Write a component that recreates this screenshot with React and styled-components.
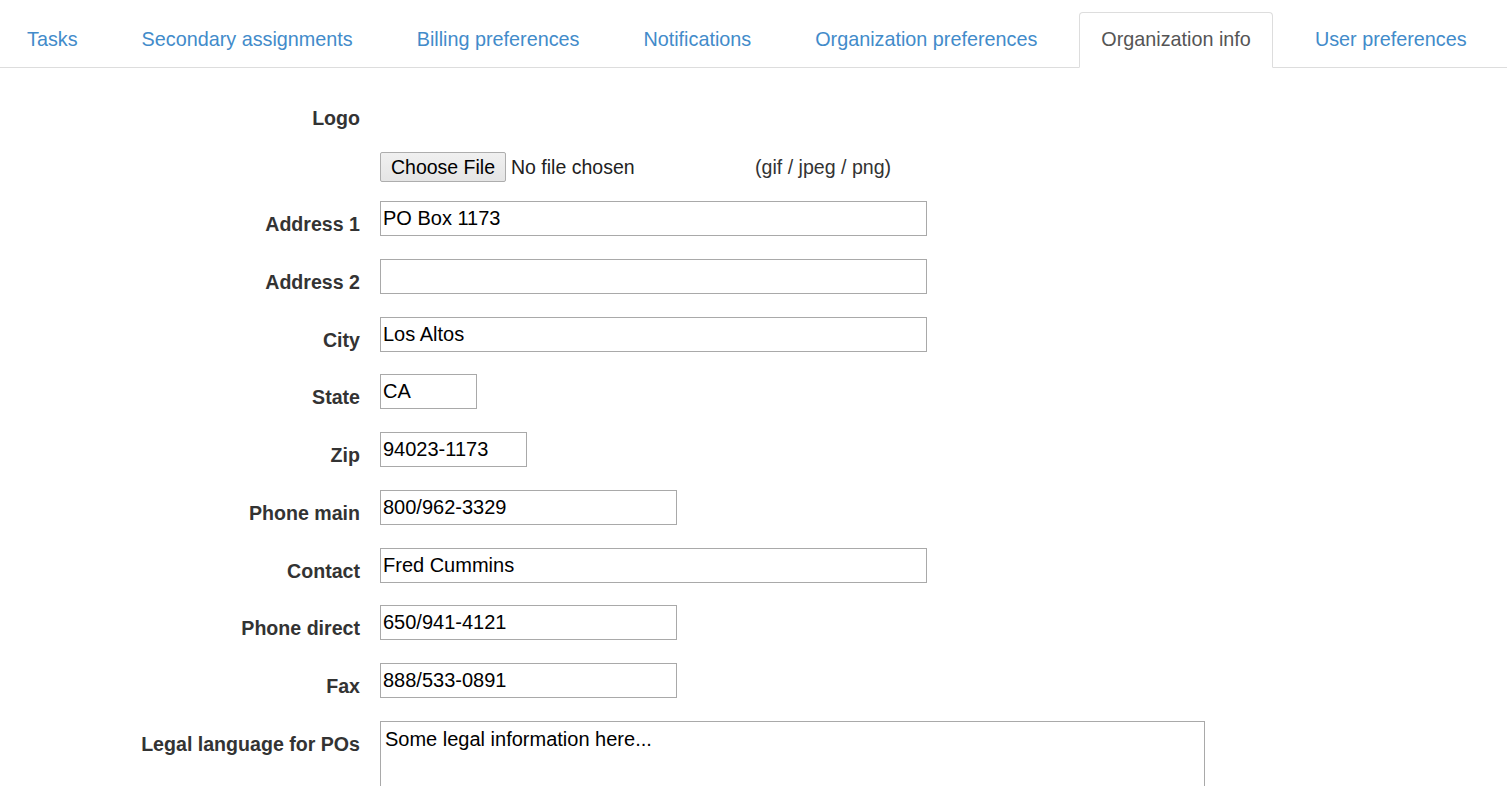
import React from "react";
import styled, { createGlobalStyle } from "styled-components";

const Global = createGlobalStyle`
  html, body { margin: 0; padding: 0; background: #fff; }
  body {
    font-family: "Liberation Sans", Arial, Helvetica, sans-serif;
    color: #333;
    overflow: hidden;
  }
  * { box-sizing: border-box; }
`;

const TabBar = styled.ul`
  display: flex;
  list-style: none;
  margin: 12px 0 0 0;
  padding: 0 0 0 5px;
  border-bottom: 1px solid #ddd;
`;

const TabItem = styled.li`
  margin: 0 20px -1px 0;
`;

const TabLink = styled.a`
  display: block;
  padding: 12px 21px 14px;
  line-height: 28px;
  font-size: 19.8px;
  text-decoration: none;
  white-space: nowrap;
  border: 1px solid ${(p) => (p.$active ? "#ddd" : "transparent")};
  border-bottom-color: ${(p) => (p.$active ? "#fff" : "transparent")};
  border-radius: 4px 4px 0 0;
  background: ${(p) => (p.$active ? "#fff" : "transparent")};
  color: ${(p) => (p.$active ? "#555" : "#428bca")};
  cursor: ${(p) => (p.$active ? "default" : "pointer")};
`;

const Form = styled.form`
  margin-top: 27px;
`;

const Row = styled.div`
  display: grid;
  grid-template-columns: 360px 1fr;
  column-gap: 20px;
  align-items: start;
  margin-bottom: ${(p) => p.$gap ?? "22.75px"};
`;

const Label = styled.label`
  text-align: right;
  font-weight: bold;
  font-size: 19.6px;
  line-height: 23px;
  padding-top: 12px;
  white-space: nowrap;
  color: #333;
`;

const Field = styled.div`
  display: flex;
  align-items: center;
`;

const TextInput = styled.input`
  width: ${(p) => p.$w}px;
  height: 35px;
  padding: 1px 2px;
  border: 1px solid #a9a9a9;
  border-radius: 0;
  font-family: "Liberation Sans", Arial, sans-serif;
  font-size: 20px;
  color: #000;
  background: #fff;
  outline: none;
`;

const TextArea = styled.textarea`
  width: 825px;
  height: 130px;
  padding: 6px 4px;
  border: 1px solid #a9a9a9;
  border-radius: 0;
  font-family: "Liberation Sans", Arial, sans-serif;
  font-size: 20px;
  line-height: 23px;
  color: #000;
  resize: none;
  outline: none;
  display: block;
`;

const FileControl = styled.div`
  width: 375px;
  display: flex;
  align-items: center;
  gap: 5px;
`;

const FileButton = styled.button`
  height: 30px;
  width: 126px;
  padding: 0;
  border: 1px solid #adadad;
  border-radius: 2px;
  background: linear-gradient(#f0f0f0, #e5e5e5);
  font-family: "Liberation Sans", Arial, sans-serif;
  font-size: 19.5px;
  color: #000;
  line-height: 28px;
`;

const FileStatus = styled.span`
  font-size: 19.5px;
  color: #222;
`;

const Hint = styled.span`
  font-size: 19.6px;
  color: #333;
`;

const tabs = [
  "Tasks",
  "Secondary assignments",
  "Billing preferences",
  "Notifications",
  "Organization preferences",
  "Organization info",
  "User preferences",
];

const fields = [
  { label: "Address 1", value: "PO Box 1173", w: 547 },
  { label: "Address 2", value: "", w: 547 },
  { label: "City", value: "Los Altos", w: 547 },
  { label: "State", value: "CA", w: 97 },
  { label: "Zip", value: "94023-1173", w: 147 },
  { label: "Phone main", value: "800/962-3329", w: 297 },
  { label: "Contact", value: "Fred Cummins", w: 547 },
  { label: "Phone direct", value: "650/941-4121", w: 297 },
  { label: "Fax", value: "888/533-0891", w: 297 },
];

export default function App() {
  return (
    <>
      <Global />
      <TabBar>
        {tabs.map((t) => (
          <TabItem key={t}>
            <TabLink $active={t === "Organization info"}>{t}</TabLink>
          </TabItem>
        ))}
      </TabBar>
      <Form onSubmit={(e) => e.preventDefault()}>
        <Row $gap="22px">
          <Label>Logo</Label>
          <div />
        </Row>
        <Row $gap="19px">
          <div />
          <Field>
            <FileControl>
              <FileButton type="button">Choose File</FileButton>
              <FileStatus>No file chosen</FileStatus>
            </FileControl>
            <Hint>(gif / jpeg / png)</Hint>
          </Field>
        </Row>
        {fields.map((f) => (
          <Row key={f.label}>
            <Label>{f.label}</Label>
            <Field>
              <TextInput $w={f.w} defaultValue={f.value} />
            </Field>
          </Row>
        ))}
        <Row>
          <Label>Legal language for POs</Label>
          <div>
            <TextArea defaultValue="Some legal information here..." />
          </div>
        </Row>
      </Form>
    </>
  );
}
